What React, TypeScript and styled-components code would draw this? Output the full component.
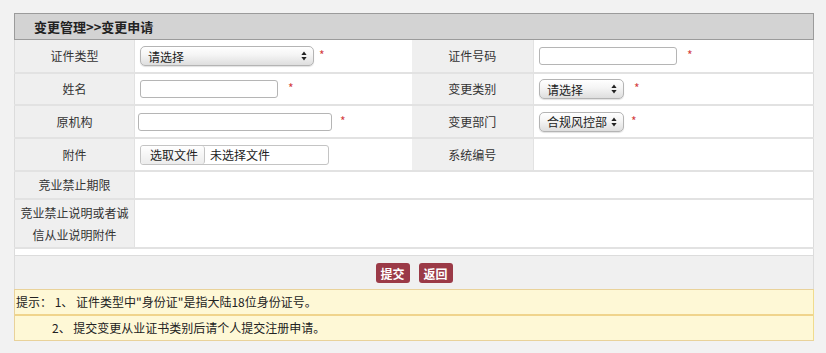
import React from 'react';
import styled, { createGlobalStyle } from 'styled-components';

const GlobalStyle = createGlobalStyle`
    html, body {
        margin: 0;
        padding: 0;
        background: #f2f2f2;
        font-family: 'Noto Sans CJK SC', 'Liberation Sans', sans-serif;
        font-size: 12px;
        color: #333;
    }
`;

const Page = styled.div`
    padding: 13px 0 0 14px;
`;

const Panel = styled.div`
    width: 800px;
`;

const TitleBar = styled.div`
    height: 25px;
    line-height: 25px;
    background: #d3d3d3;
    border: 1px solid #9b9b9b;
    padding-left: 19px;
    font-size: 13px;
    font-weight: bold;
    color: #222;
`;

const FormTable = styled.table`
    width: 100%;
    border-collapse: collapse;
    table-layout: fixed;
    background: #fff;
    border-right: 1px solid #dcdcdc;
    border-left: 1px solid #dcdcdc;
`;

const Row = styled.tr<{ height: number }>`
    height: ${(props) => props.height}px;
`;

const Label = styled.td`
    background: #efefef;
    border-bottom: 2px solid #e2e2e2;
    border-right: 1px solid #e2e2e2;
    text-align: center;
    vertical-align: middle;
    padding: 0 2px;
    line-height: 22px;
    color: #333;
`;

const Value = styled.td<{ indent?: number }>`
    background: #fff;
    border-bottom: 2px solid #e2e2e2;
    padding: 0 0 0 ${(props) => (props.indent !== undefined ? props.indent : 5)}px;
    vertical-align: middle;
`;

const Field = styled.div`
    display: flex;
    align-items: center;
`;

const TextInput = styled.input<{ width: number }>`
    box-sizing: border-box;
    width: ${(props) => props.width}px;
    height: 18px;
    border: 1px solid #b5b5b5;
    border-radius: 3px;
    background: #fff;
    padding: 0 4px;
    font-size: 12px;
    font-family: inherit;
    outline: none;
`;

const SelectWrap = styled.div<{ width: number }>`
    position: relative;
    width: ${(props) => props.width}px;
    height: 20px;
`;

const Select = styled.select`
    appearance: none;
    box-sizing: border-box;
    width: 100%;
    height: 100%;
    border: 1px solid #b4b4b4;
    border-radius: 5px;
    background: linear-gradient(#ffffff, #f4f4f4 45%, #dedede);
    box-shadow: 0 1px 1px rgba(0, 0, 0, 0.12);
    padding: 0 14px 0 7px;
    font-size: 12px;
    font-family: inherit;
    color: #222;
    outline: none;
`;

const Arrows = styled.svg`
    position: absolute;
    right: 7px;
    top: 5px;
    pointer-events: none;
`;

const Required = styled.span<{ gap: number }>`
    color: #d43f3f;
    font-size: 12px;
    margin-left: ${(props) => props.gap}px;
    line-height: 12px;
    position: relative;
    top: -1px;
`;

const FileBox = styled.div`
    box-sizing: border-box;
    width: 189px;
    height: 20px;
    border: 1px solid #c4c4c4;
    border-radius: 3px;
    background: #fff;
    display: flex;
    align-items: center;
`;

const FileButton = styled.span`
    box-sizing: border-box;
    height: 18px;
    line-height: 17px;
    padding: 0 6px 0 9px;
    border-right: 1px solid #c4c4c4;
    border-radius: 3px;
    background: linear-gradient(#ffffff, #ececec);
    color: #222;
`;

const FileName = styled.span`
    margin-left: 5px;
    color: #222;
`;

const Spacer = styled.div`
    height: 6px;
    background: #fff;
    border-left: 1px solid #dcdcdc;
    border-right: 1px solid #dcdcdc;
    border-bottom: 1px solid #dcdcdc;
`;

const ButtonBar = styled.div`
    height: 32px;
    background: #f0f0f0;
    border-left: 1px solid #dcdcdc;
    border-right: 1px solid #dcdcdc;
    display: flex;
    justify-content: center;
    align-items: center;
    gap: 9px;
    padding-top: 1px;
`;

const ActionButton = styled.button`
    width: 34px;
    height: 20px;
    padding: 0;
    border: none;
    border-radius: 3px;
    background: #9b3a47;
    color: #fff;
    font-size: 12px;
    font-weight: bold;
    font-family: inherit;
    cursor: pointer;
`;

const Tips = styled.div`
    background: #fef8d6;
    border: 1px solid #e9d29a;
    border-right-color: #f0dc8e;
`;

const TipLine = styled.div<{ indent: number; divider?: boolean }>`
    height: 24px;
    line-height: 24px;
    padding-left: ${(props) => props.indent}px;
    border-top: ${(props) => (props.divider ? '2px solid #f0d48c' : 'none')};
    color: #222;
    white-space: pre;
`;

const SelectBox = ({ width, text }: { width: number; text: string }) => (
    <SelectWrap width={width}>
        <Select defaultValue={text}>
            <option>{text}</option>
        </Select>
        <Arrows width="6" height="10" viewBox="0 0 6 10">
            <path d="M3 0.5 L5.6 4 H0.4 Z" fill="#222" />
            <path d="M3 9.5 L5.6 6 H0.4 Z" fill="#222" />
        </Arrows>
    </SelectWrap>
);

const App: React.FC = () => {
    return (
        <Page>
            <GlobalStyle />
            <Panel>
                <TitleBar>变更管理&gt;&gt;变更申请</TitleBar>
                <FormTable>
                    <colgroup>
                        <col style={{ width: 120 }} />
                        <col style={{ width: 277 }} />
                        <col style={{ width: 122 }} />
                        <col />
                    </colgroup>
                    <tbody>
                        <Row height={33}>
                            <Label>证件类型</Label>
                            <Value>
                                <Field>
                                    <SelectBox width={174} text="请选择" />
                                    <Required gap={5}>*</Required>
                                </Field>
                            </Value>
                            <Label>证件号码</Label>
                            <Value>
                                <Field>
                                    <TextInput width={138} />
                                    <Required gap={10}>*</Required>
                                </Field>
                            </Value>
                        </Row>
                        <Row height={32}>
                            <Label>姓名</Label>
                            <Value>
                                <Field>
                                    <TextInput width={138} />
                                    <Required gap={10}>*</Required>
                                </Field>
                            </Value>
                            <Label>变更类别</Label>
                            <Value>
                                <Field>
                                    <SelectBox width={85} text="请选择" />
                                    <Required gap={10}>*</Required>
                                </Field>
                            </Value>
                        </Row>
                        <Row height={33}>
                            <Label>原机构</Label>
                            <Value indent={3}>
                                <Field>
                                    <TextInput width={194} />
                                    <Required gap={8}>*</Required>
                                </Field>
                            </Value>
                            <Label>变更部门</Label>
                            <Value>
                                <Field>
                                    <SelectBox width={85} text="合规风控部" />
                                    <Required gap={7}>*</Required>
                                </Field>
                            </Value>
                        </Row>
                        <Row height={33}>
                            <Label>附件</Label>
                            <Value>
                                <FileBox>
                                    <FileButton>选取文件</FileButton>
                                    <FileName>未选择文件</FileName>
                                </FileBox>
                            </Value>
                            <Label>系统编号</Label>
                            <Value />
                        </Row>
                        <Row height={28}>
                            <Label>竞业禁止期限</Label>
                            <Value colSpan={3} />
                        </Row>
                        <Row height={49}>
                            <Label>竞业禁止说明或者诚信从业说明附件</Label>
                            <Value colSpan={3} />
                        </Row>
                    </tbody>
                </FormTable>
                <Spacer />
                <ButtonBar>
                    <ActionButton>提交</ActionButton>
                    <ActionButton>返回</ActionButton>
                </ButtonBar>
                <Tips>
                    <TipLine indent={1}>提示： 1、 证件类型中"身份证"是指大陆18位身份证号。</TipLine>
                    <TipLine indent={37} divider>
                        2、 提交变更从业证书类别后请个人提交注册申请。
                    </TipLine>
                </Tips>
            </Panel>
        </Page>
    );
};

export default App;
